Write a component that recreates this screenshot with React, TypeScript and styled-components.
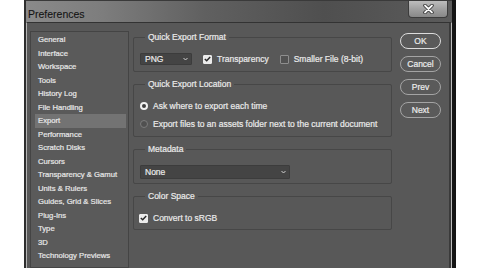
import { createGlobalStyle, styled } from 'styled-components';

const GlobalStyle = createGlobalStyle`
  * { box-sizing: border-box; }
  html, body { margin: 0; padding: 0; background: #ffffff; }
  body { font-family: 'Liberation Sans', Arial, sans-serif; -webkit-text-stroke: 0.2px currentColor; }
`;

const Window = styled.div`
  margin-left: 24px;
  width: 432px;
  height: 268px;
  display: flex;
  flex-direction: column;
  border-left: 2px solid #2e2e2e;
  border-right: 4px solid #141414;
  overflow: hidden;
`;

const TitleBar = styled.div`
  height: 22px;
  flex: none;
  display: flex;
  align-items: flex-start;
  justify-content: space-between;
  border-top: 1px solid #3a3a3a;
  background: linear-gradient(90deg, #8a8a8a 0%, #7d7d7d 18%, #606060 42%, #4f4f4f 70%, #5b5b5b 100%);
`;

const Title = styled.span`
  margin: 6.5px 0 0 2px;
  font-size: 10.5px;
  line-height: 12px;
  color: #141414;
  -webkit-text-stroke: 0.1px currentColor;
`;

const CloseButton = styled.button`
  width: 40px;
  height: 17px;
  margin-right: 4px;
  padding: 0;
  display: flex;
  align-items: center;
  justify-content: center;
  border: 1px solid #3c3c3c;
  border-top: none;
  border-radius: 0 0 4px 4px;
  background: linear-gradient(180deg, #bdbdbd 0%, #a0a0a0 50%, #888 100%);
`;

const Body = styled.div`
  flex: 1;
  display: flex;
  align-items: flex-start;
  padding: 8px 10px 0 3px;
  background: #585858;
  border-top: 1px solid #333;
  border-left: 1px solid #b5b5b5;
  border-right: 1px solid #bdbdbd;
  box-shadow: inset -2px 0 0 #3a3a3a;
`;

const Sidebar = styled.ul`
  align-self: stretch;
  width: 99px;
  margin: 0 4px 0 0;
  padding: 1px 2px 0 4px;
  list-style: none;
  background: #5a5a5a;
  border: 1px solid #444;
`;

const SidebarItem = styled.li<{ $selected?: boolean }>`
  height: 13.5px;
  padding-left: 3px;
  font-size: 7.7px;
  line-height: 13.5px;
  white-space: nowrap;
  color: #e8e8e8;
  background: ${({ $selected }) => ($selected ? '#737373' : 'transparent')};
`;

const Main = styled.div`
  width: 259px;
  margin-right: 8px;
  display: flex;
  flex-direction: column;
  gap: 6px;
`;

const Group = styled.fieldset<{ $bottom?: number }>`
  margin: 0;
  min-width: 0;
  padding: 10px 6px ${({ $bottom }) => $bottom ?? 6}px;
  border: 1px solid #474747;
  border-radius: 2px;
  display: flex;
  flex-direction: column;
  gap: 6px;
`;

const Legend = styled.legend`
  margin-left: 5px;
  padding: 0 3px;
  font-size: 8.5px;
  line-height: 12px;
  color: #eaeaea;
`;

const Row = styled.div`
  height: 12px;
  display: flex;
  align-items: center;
  font-size: 8.5px;
  color: #eaeaea;
  white-space: nowrap;
`;

const Select = styled.div<{ $width: number; $height: number }>`
  width: ${({ $width }) => $width}px;
  height: ${({ $height }) => $height}px;
  padding: 0 3px 0 4px;
  display: flex;
  align-items: center;
  justify-content: space-between;
  font-size: 8.5px;
  color: #eaeaea;
  background: #444;
  border: 1px solid #3c3c3c;
  border-radius: 1px;
`;

const Option = styled.label<{ $gap?: number }>`
  display: flex;
  align-items: center;
  gap: 5px;
  margin-left: ${({ $gap }) => $gap ?? 0}px;
`;

const Box = styled.span<{ $checked?: boolean }>`
  width: 9px;
  height: 9px;
  display: flex;
  align-items: center;
  justify-content: center;
  border-radius: 1px;
  background: ${({ $checked }) => ($checked ? '#ebebeb' : '#525252')};
  border: 1px solid ${({ $checked }) => ($checked ? '#ebebeb' : '#8e8e8e')};
`;

const Radio = styled.span<{ $checked?: boolean }>`
  width: 8px;
  height: 8px;
  border-radius: 50%;
  background: ${({ $checked }) => ($checked ? '#3c3c3c' : '#505050')};
  border: ${({ $checked }) => ($checked ? '2.5px solid #f0f0f0' : '1px solid #7c7c7c')};
`;

const Buttons = styled.div`
  margin-top: 2px;
  display: flex;
  flex-direction: column;
  gap: 7px;
`;

const ActionButton = styled.button<{ $primary?: boolean }>`
  width: 41px;
  height: 16px;
  padding: 0;
  border-radius: 8px;
  font-family: 'Liberation Sans', Arial, sans-serif;
  font-size: 8.5px;
  color: #ececec;
  background: #5a5a5a;
  border: ${({ $primary }) => ($primary ? '1.5px solid #dcdcdc' : '1px solid #a4a4a4')};
`;

const sections = [
  'General',
  'Interface',
  'Workspace',
  'Tools',
  'History Log',
  'File Handling',
  'Export',
  'Performance',
  'Scratch Disks',
  'Cursors',
  'Transparency & Gamut',
  'Units & Rulers',
  'Guides, Grid & Slices',
  'Plug-Ins',
  'Type',
  '3D',
  'Technology Previews',
];

function Chevron() {
  return (
    <svg width="5" height="4" viewBox="0 0 5 4">
      <polyline points="0.5,1 2.5,3 4.5,1" fill="none" stroke="#cfcfcf" strokeWidth="1" />
    </svg>
  );
}

function Check({ checked }: { checked?: boolean }) {
  return (
    <Box $checked={checked}>
      {checked && (
        <svg width="7" height="6" viewBox="0 0 7 6">
          <polyline points="0.8,3 2.7,4.8 6.2,1" fill="none" stroke="#2a2a2a" strokeWidth="1.5" />
        </svg>
      )}
    </Box>
  );
}

export default function App() {
  return (
    <>
      <GlobalStyle />
      <Window>
        <TitleBar>
          <Title>Preferences</Title>
          <CloseButton>
            <svg width="11" height="10" viewBox="0 0 11 10">
              <path d="M2 1.5 L9 8.5 M9 1.5 L2 8.5" stroke="#2a2a2a" strokeWidth="3.4" strokeLinecap="round" />
              <path d="M2 1.5 L9 8.5 M9 1.5 L2 8.5" stroke="#fafafa" strokeWidth="1.8" strokeLinecap="round" />
            </svg>
          </CloseButton>
        </TitleBar>
        <Body>
          <Sidebar>
            {sections.map((s) => (
              <SidebarItem key={s} $selected={s === 'Export'}>
                {s}
              </SidebarItem>
            ))}
          </Sidebar>
          <Main>
            <Group>
              <Legend>Quick Export Format</Legend>
              <Row>
                <Select $width={52} $height={12}>
                  PNG
                  <Chevron />
                </Select>
                <Option $gap={11}>
                  <Check checked />
                  Transparency
                </Option>
                <Option $gap={11}>
                  <Check />
                  Smaller File (8-bit)
                </Option>
              </Row>
            </Group>
            <Group>
              <Legend>Quick Export Location</Legend>
              <Row>
                <Option>
                  <Radio $checked />
                  Ask where to export each time
                </Option>
              </Row>
              <Row>
                <Option>
                  <Radio />
                  Export files to an assets folder next to the current document
                </Option>
              </Row>
            </Group>
            <Group $bottom={4}>
              <Legend>Metadata</Legend>
              <Select $width={150} $height={14}>
                None
                <Chevron />
              </Select>
            </Group>
            <Group $bottom={5}>
              <Legend>Color Space</Legend>
              <Row>
                <Option $gap={-1}>
                  <Check checked />
                  Convert to sRGB
                </Option>
              </Row>
            </Group>
          </Main>
          <Buttons>
            <ActionButton $primary>OK</ActionButton>
            <ActionButton>Cancel</ActionButton>
            <ActionButton>Prev</ActionButton>
            <ActionButton>Next</ActionButton>
          </Buttons>
        </Body>
      </Window>
    </>
  );
}
